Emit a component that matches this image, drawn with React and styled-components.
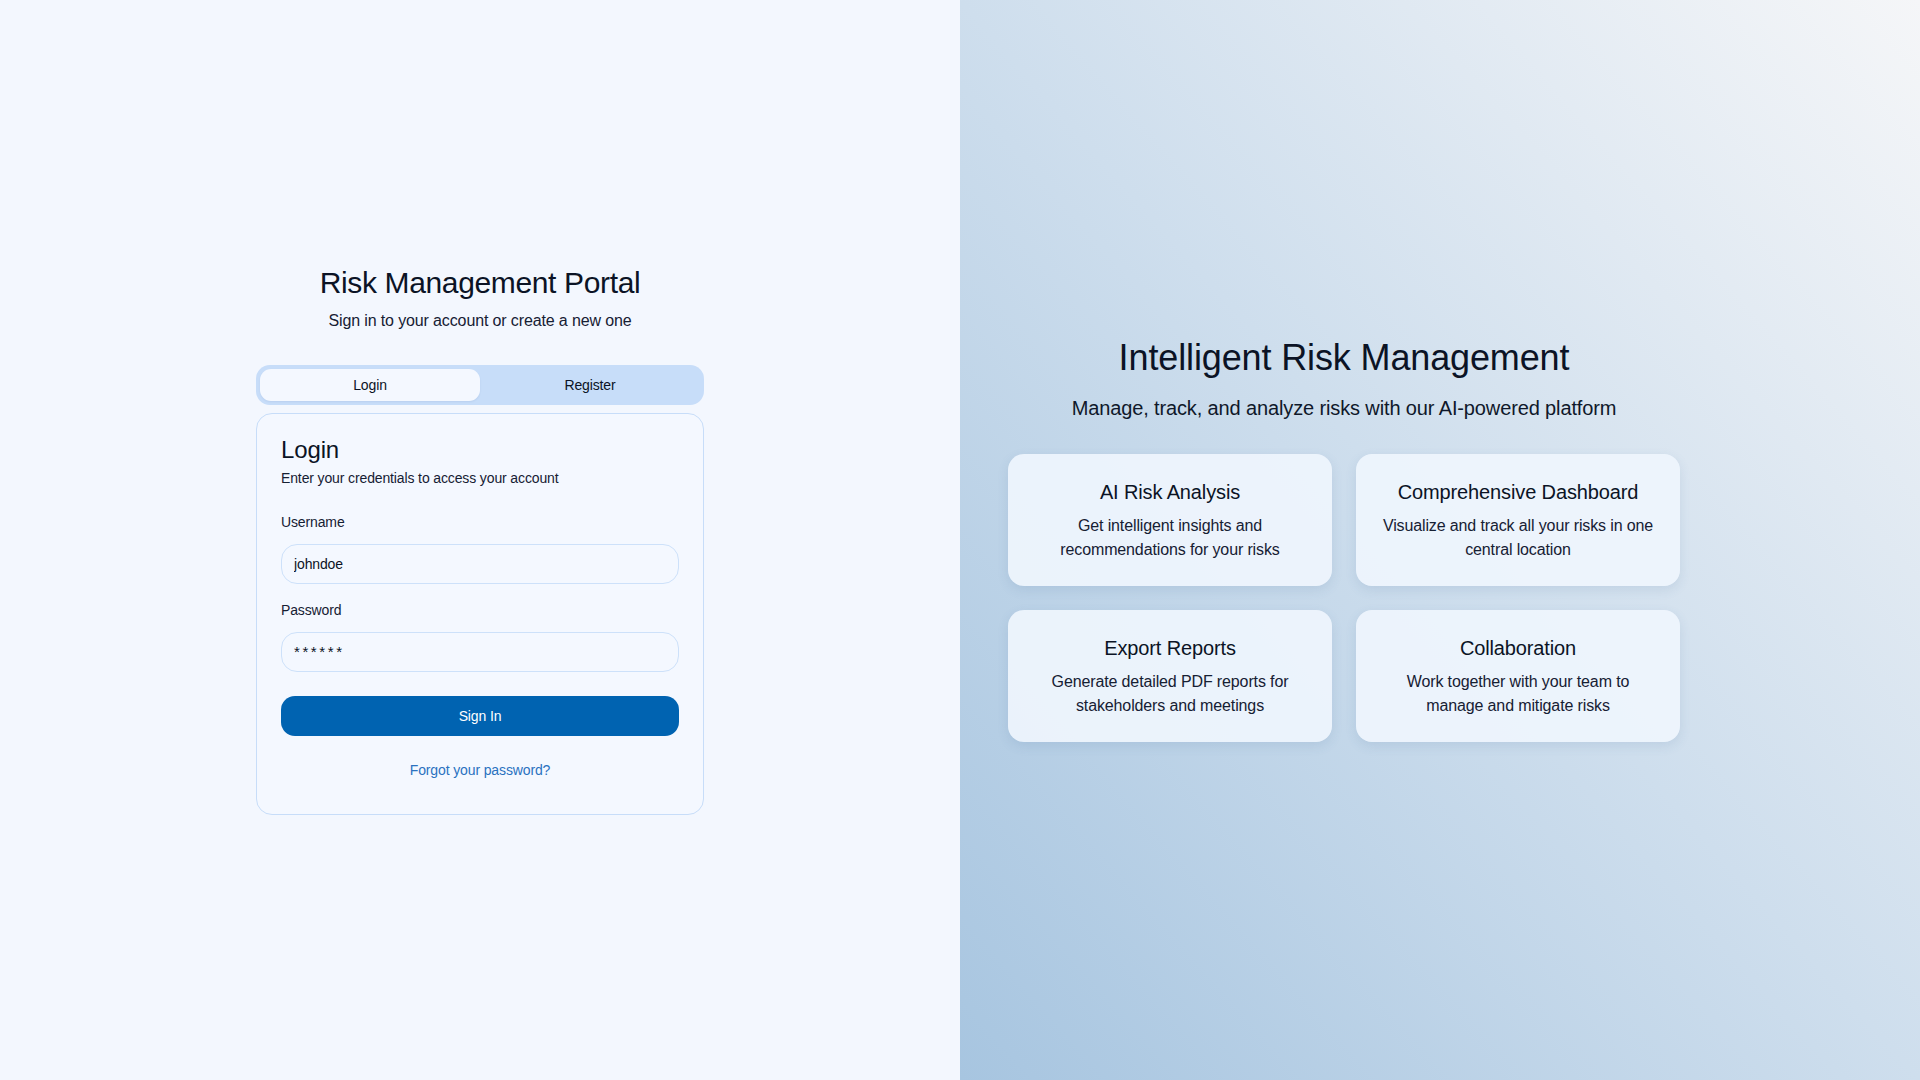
import React from 'react'
import styled, { createGlobalStyle } from 'styled-components';

const features = [
  { id: 1, title: 'AI Risk Analysis', text: 'Get intelligent insights and recommendations for your risks' },
  { id: 2, title: 'Comprehensive Dashboard', text: 'Visualize and track all your risks in one central location' },
  { id: 3, title: 'Export Reports', text: 'Generate detailed PDF reports for stakeholders and meetings' },
  { id: 4, title: 'Collaboration', text: 'Work together with your team to manage and mitigate risks' },
];

export default function App() {
  return (
    <>
      <GlobalStyle />
      <Page>
        <LeftPanel>
          <AuthBox>
            <Heading>
              <h1>Risk Management Portal</h1>
              <p>Sign in to your account or create a new one</p>
            </Heading>
            <TabList>
              <Tab $active>Login</Tab>
              <Tab>Register</Tab>
            </TabList>
            <Card>
              <CardHeader>
                <h2>Login</h2>
                <p>Enter your credentials to access your account</p>
              </CardHeader>
              <Form onSubmit={(e) => e.preventDefault()}>
                <Field>
                  <Label htmlFor="username">Username</Label>
                  <Input id="username" defaultValue="johndoe" />
                </Field>
                <Field>
                  <Label htmlFor="password">Password</Label>
                  <Input id="password" defaultValue="******" $masked />
                </Field>
                <SubmitButton type="submit">Sign In</SubmitButton>
                <ForgotLink href="#">Forgot your password?</ForgotLink>
              </Form>
            </Card>
          </AuthBox>
        </LeftPanel>
        <RightPanel>
          <Hero>
            <h1>Intelligent Risk Management</h1>
            <p>Manage, track, and analyze risks with our AI-powered platform</p>
            <FeatureGrid>
              {features.map((f) => (
                <Feature key={f.id}>
                  <h3>{f.title}</h3>
                  <p>{f.text}</p>
                </Feature>
              ))}
            </FeatureGrid>
          </Hero>
        </RightPanel>
      </Page>
    </>
  )
}

const GlobalStyle = createGlobalStyle`
  * { box-sizing: border-box; }
  html, body {
    margin: 0;
    padding: 0;
    font-family: "Liberation Sans", Arial, sans-serif;
    letter-spacing: -0.008em;
    color: #0b1325;
  }
  h1, h2, h3, p { margin: 0; font-weight: 400; }
`

const Page = styled.main`
  display: grid;
  grid-template-columns: 1fr 1fr;
  width: 100%;
  height: 100vh;
`

const LeftPanel = styled.section`
  display: flex;
  align-items: center;
  justify-content: center;
  background: #f3f7fe;
`

const AuthBox = styled.div`
  width: 448px;
  margin-top: -1px;
`

const Heading = styled.div`
  text-align: center;
  margin-bottom: 32px;
  h1 {
    font-size: 30px;
    line-height: 36px;
    letter-spacing: -0.012em;
  }
  p {
    margin-top: 8px;
    font-size: 16px;
    line-height: 24px;
    color: #162033;
  }
`

const TabList = styled.div`
  display: grid;
  grid-template-columns: 1fr 1fr;
  height: 40px;
  padding: 4px;
  border-radius: 14px;
  background: #c7ddf9;
`

const Tab = styled.button`
  border: none;
  border-radius: 11px;
  font-family: inherit;
  font-size: 14px;
  letter-spacing: inherit;
  color: #0b1325;
  background: ${(p) => (p.$active ? '#f4f8ff' : 'transparent')};
  box-shadow: ${(p) => (p.$active ? '0 1px 2px rgba(30, 70, 130, 0.08)' : 'none')};
  cursor: pointer;
`

const Card = styled.div`
  margin-top: 8px;
  border: 1px solid #c7ddf9;
  border-radius: 16px;
  background: #f4f8ff;
`

const CardHeader = styled.div`
  padding: 24px 24px 0;
  h2 {
    font-size: 24px;
    line-height: 24px;
  }
  p {
    margin-top: 6px;
    font-size: 14px;
    line-height: 20px;
    color: #162033;
  }
`

const Form = styled.form`
  display: flex;
  flex-direction: column;
  padding: 24px 24px 34px;
`

const Field = styled.div`
  display: flex;
  flex-direction: column;
  gap: 12px;
  margin-bottom: 16px;
  &:last-of-type { margin-bottom: 24px; }
`

const Label = styled.label`
  font-size: 14px;
  line-height: 20px;
  color: #162033;
`

const Input = styled.input`
  height: 40px;
  padding: 0 12px;
  border: 1px solid #cde1fa;
  border-radius: 16px;
  background: #f4f8ff;
  font-family: inherit;
  font-size: ${(p) => (p.$masked ? '15px' : '14px')};
  letter-spacing: ${(p) => (p.$masked ? '2.6px' : 'inherit')};
  color: #0b1325;
  outline: none;
`

const SubmitButton = styled.button`
  height: 40px;
  border: none;
  border-radius: 14px;
  background: #0063b1;
  color: #ffffff;
  font-family: inherit;
  font-size: 14px;
  letter-spacing: inherit;
  cursor: pointer;
`

const ForgotLink = styled.a`
  margin-top: 24px;
  text-align: center;
  font-size: 14px;
  line-height: 20px;
  color: #2a72bf;
  text-decoration: none;
`

const RightPanel = styled.section`
  display: flex;
  align-items: center;
  padding: 48px;
  background: linear-gradient(to top right, #a7c5e0 0%, #cedeed 50%, #f5f6f8 100%);
`

const Hero = styled.div`
  width: 100%;
  max-width: 672px;
  text-align: center;
  h1 {
    font-size: 36px;
    line-height: 40px;
    margin-bottom: 16px;
  }
  > p {
    font-size: 20px;
    line-height: 28px;
    color: #0f182a;
  }
`

const FeatureGrid = styled.div`
  display: grid;
  grid-template-columns: 1fr 1fr;
  gap: 24px;
  margin-top: 32px;
`

const Feature = styled.div`
  padding: 24px;
  border-radius: 16px;
  background: rgba(239, 245, 253, 0.92);
  box-shadow: 0 4px 12px rgba(60, 100, 150, 0.12);
  h3 {
    font-size: 20px;
    line-height: 28px;
    margin-bottom: 8px;
  }
  p {
    font-size: 16px;
    line-height: 24px;
    color: #162033;
  }
`
